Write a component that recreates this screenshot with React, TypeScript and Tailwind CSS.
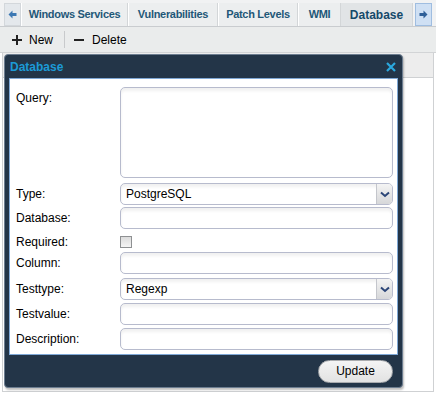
import React from "react";

const font = { fontFamily: '"Liberation Sans", Arial, sans-serif' };

function Input({ h = 22 }: { h?: number }) {
  return (
    <div
      className="w-[273px] shrink-0 rounded-[5px] border border-[#b7bbcd] bg-white shadow-[inset_0_3px_3px_rgba(0,0,0,0.06)]"
      style={{ height: h }}
    />
  );
}

function Select({ value }: { value: string }) {
  return (
    <div className="flex h-[22px] w-[273px] shrink-0 items-stretch overflow-hidden rounded-[5px] border border-[#b7bbcd] bg-white shadow-[inset_0_3px_3px_rgba(0,0,0,0.06)]">
      <div className="flex flex-1 items-center pl-[5px] text-[12px] text-black">{value}</div>
      <div className="flex w-[16px] items-center justify-center border-l border-[#c4c6cc] bg-gradient-to-b from-[#f4f4f4] to-[#d6d7d9]">
        <svg width="10" height="7" viewBox="0 0 10 7">
          <path d="M1 1.5 L5 5 L9 1.5" stroke="#2c4678" strokeWidth="2" fill="none" />
        </svg>
      </div>
    </div>
  );
}

function Row({ label, children, h }: { label: string; children: React.ReactNode; h: number }) {
  return (
    <div className="flex items-start" style={{ height: h }}>
      <div className="flex h-[22px] w-[109px] items-center pl-[5px] text-[12px] text-black">{label}</div>
      {children}
    </div>
  );
}

export default function App() {
  const tabs = [
    { t: "Windows Services", w: 107 },
    { t: "Vulnerabilities", w: 90 },
    { t: "Patch Levels", w: 80 },
    { t: "WMI", w: 43 },
  ];
  return (
    <div className="relative flex h-[396px] w-[436px] flex-col overflow-hidden bg-white" style={font}>
      {/* Tab bar */}
      <div className="flex h-[27px] items-end border-b border-[#c9cccf] bg-[#f1f2f3] pl-[4px]">
        <div className="flex h-[23px] w-[17px] items-center justify-center border border-[#d3d7db] bg-[#e4e8ec]">
          <svg width="9" height="9" viewBox="0 0 9 9">
            <path d="M0.5 4.5 L4.5 0.5 L4.5 3 L8.5 3 L8.5 6 L4.5 6 L4.5 8.5 Z" fill="#3c78b3" />
          </svg>
        </div>
        {tabs.map((x) => (
          <div
            key={x.t}
            className="flex h-[23px] items-center justify-center border-r border-[#d3d6d8] border-l border-l-white bg-[#eceeef] text-[11px] font-bold tracking-[-0.3px] text-[#1f5878]"
            style={{ width: x.w }}
          >
            {x.t}
          </div>
        ))}
        <div className="flex h-[23px] w-[72px] items-center justify-center border-r border-[#d3d6d8] bg-[#e1e4e6] text-[12px] font-bold text-[#15496a]">
          Database
        </div>
        <div className="ml-[2px] flex h-[23px] w-[17px] items-center justify-center border border-[#9fbde0] bg-[#cfe0f4]">
          <svg width="9" height="9" viewBox="0 0 9 9">
            <path d="M8.5 4.5 L4.5 0.5 L4.5 3 L0.5 3 L0.5 6 L4.5 6 L4.5 8.5 Z" fill="#2f5f98" />
          </svg>
        </div>
      </div>

      {/* Toolbar */}
      <div className="flex h-[26px] items-center border-b border-[#d2d4d6] bg-[#eaecec] text-[12px] text-black">
        <div className="ml-[12px] flex items-center gap-[7px]">
          <svg width="10" height="10" viewBox="0 0 10 10">
            <path d="M5 0 V10 M0 5 H10" stroke="#222" strokeWidth="2" />
          </svg>
          <span>New</span>
        </div>
        <div className="ml-[11px] h-[17px] w-px bg-[#c8cacc]" />
        <div className="ml-[9px] flex items-center gap-[8px]">
          <svg width="10" height="10" viewBox="0 0 10 10">
            <path d="M0 5 H10" stroke="#222" strokeWidth="2" />
          </svg>
          <span>Delete</span>
        </div>
      </div>

      {/* Body behind */}
      <div className="mx-[2px] flex flex-1 flex-col border-x border-b border-[#cfd1d3]">
        <div className="h-[25px] border-b border-[#cfd1d3] bg-[#ededed]" />
        <div className="flex-1 bg-white" />
      </div>
      <div className="h-[4px]" />

      {/* Dialog */}
      <div className="absolute left-[4px] top-[54px] flex h-[334px] w-[399px] flex-col rounded-[4px] border border-[#6c7d90] bg-[#233548] shadow-[1px_2px_2px_rgba(0,0,0,0.25)]">
        <div className="flex h-[23px] items-center justify-between pl-[5px] pr-[6px]">
          <span className="text-[12px] font-bold text-[#1c9ad6]">Database</span>
          <svg width="10" height="10" viewBox="0 0 10 10">
            <path d="M1 1 L9 9 M9 1 L1 9" stroke="#2ba8de" strokeWidth="2.2" />
          </svg>
        </div>
        <div className="mx-[4px] flex flex-col border border-[#7fa8d6] bg-white pl-[1px] pt-[8px]">
          <div className="flex h-[96px] items-start">
            <div className="w-[109px] pl-[5px] pt-[2px] text-[12px] text-black">Query:</div>
            <Input h={91} />
          </div>
          <Row label="Type:" h={24}>
            <Select value="PostgreSQL" />
          </Row>
          <Row label="Database:" h={29}>
            <Input />
          </Row>
          <div className="flex h-[16px] items-start">
            <div className="flex h-[12px] w-[109px] items-center pl-[5px] text-[12px] text-black">Required:</div>
            <div className="h-[12px] w-[12px] border border-[#8e9092] bg-gradient-to-b from-[#dcdcdc] to-[#f5f5f5]" />
          </div>
          <Row label="Column:" h={26}>
            <Input />
          </Row>
          <Row label="Testtype:" h={25}>
            <Select value="Regexp" />
          </Row>
          <Row label="Testvalue:" h={25}>
            <Input />
          </Row>
          <Row label="Description:" h={26}>
            <Input />
          </Row>
        </div>
        <div className="flex flex-1 items-center justify-end pr-[9px]">
          <div className="flex h-[23px] w-[75px] items-center justify-center rounded-full border border-[#a9abae] bg-gradient-to-b from-[#f4f4f4] to-[#e2e2e2] text-[12px] text-black">
            Update
          </div>
        </div>
      </div>
    </div>
  );
}
